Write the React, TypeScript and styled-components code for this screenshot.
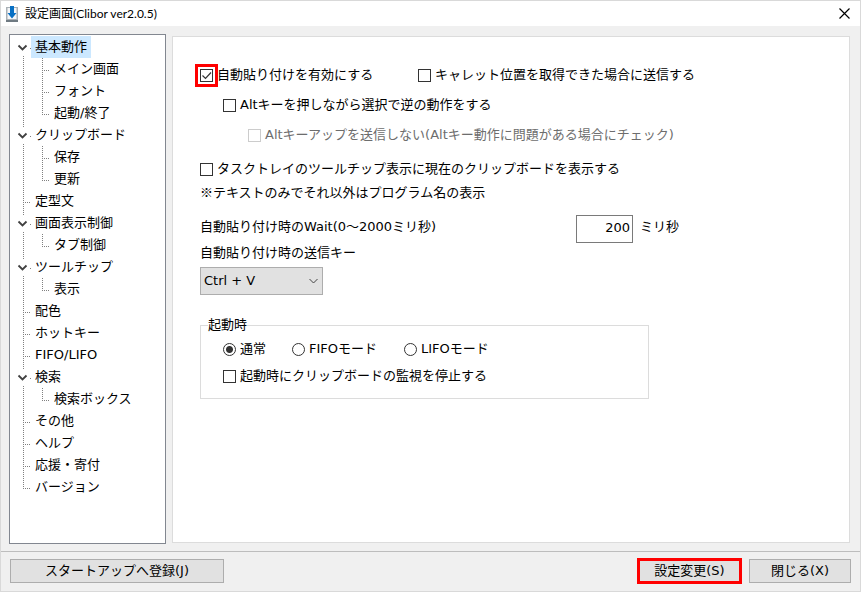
import React, { useState } from "react";
import styled, { createGlobalStyle, css } from "styled-components";

const GlobalStyle = createGlobalStyle`
  * { box-sizing: border-box; }
  body {
    margin: 0;
    color: #000;
    font: 13px/20px "DejaVu Sans", "Noto Sans CJK JP", sans-serif;
  }
  button, input, select { font: inherit; color: inherit; margin: 0; }
`;

const Window = styled.div`
  display: flex;
  flex-direction: column;
  min-height: 100vh;
  border: 1px solid #d9d9d9;
  background: #f0f0f0;
`;

const TitleBar = styled.header`
  display: flex;
  align-items: center;
  gap: 7px;
  height: 25px;
  padding: 0 10px 0 5px;
  background: #fff;
`;

const Title = styled.h1`
  flex: 1;
  margin: 0;
  font: 12px/20px Lato, "Noto Sans CJK JP", sans-serif;
`;

const CloseButton = styled.button`
  display: flex;
  padding: 0;
  border: 0;
  background: none;
`;

const Main = styled.main`
  display: flex;
  flex: 1;
  align-items: stretch;
  gap: 6px;
  padding: 8px 10px 7px 8px;
`;

const TreePane = styled.nav`
  width: 157px;
  flex: none;
  padding-top: 1px;
  border: 1px solid #828790;
  background: #fff;
`;

const TreeList = styled.ul`
  margin: 0;
  padding: 0;
  list-style: none;
`;

const TreeRow = styled.div`
  display: flex;
  height: 22px;
`;

const TreeLabel = styled.button<{ $selected: boolean }>`
  padding: 0 4px;
  border: 0;
  line-height: 22px;
  white-space: nowrap;
  background: ${(p) => (p.$selected ? "#cce8ff" : "none")};
`;

const Panel = styled.section`
  flex: 1;
  min-width: 0;
  margin: 2px 0 1px;
  padding: 28px 27px;
  border: 1px solid #dcdcdc;
  background: #fff;
`;

const Row = styled.div<{ $indent?: number; $top?: number }>`
  display: flex;
  margin-top: ${(p) => p.$top ?? 0}px;
  padding-left: ${(p) => p.$indent ?? 0}px;
`;

const PairRow = styled(Row)`
  display: grid;
  grid-template-columns: 218px 1fr;
`;

const Note = styled.p`
  margin: 3px 0 0;
  font-family: "Noto Sans CJK JP", sans-serif;
`;

const WaitRow = styled(Row)`
  display: grid;
  grid-template-columns: 369px 57px 1fr;
  column-gap: 7px;
  line-height: 24px;
`;

const NumberInput = styled.input`
  width: 100%;
  height: 28px;
  padding: 0 2px 3px;
  border: 1px solid #7a7a7a;
  text-align: right;
  background: #fff;
`;

const ChoiceLabel = styled.label<{ $disabled?: boolean }>`
  display: inline-flex;
  align-items: center;
  gap: 4px;
  white-space: nowrap;
  color: ${(p) => (p.$disabled ? "#6d6d6d" : "#000")};
`;

const Overlay = styled.span`
  display: inline-grid;
  align-items: center;
  > * { grid-area: 1 / 1; }
  > svg { justify-self: end; pointer-events: none; }
`;

const choiceBox = css`
  appearance: none;
  width: 13px;
  height: 13px;
  border: 1px solid #333;
  background: #fff;
`;

const CheckInput = styled.input<{ $marked?: boolean }>`
  ${choiceBox}
  ${(p) => p.$marked && "outline: 3px solid #f00; outline-offset: 2px;"}
  &:disabled { border-color: #ccc; }
`;

const RadioInput = styled.input`
  ${choiceBox}
  border-radius: 50%;
  &:checked { background: radial-gradient(circle, #333 3px, #fff 4px); }
`;

const KeySelect = styled.select`
  appearance: none;
  width: 123px;
  height: 28px;
  padding: 0 24px 1px 3px;
  border: 1px solid #adadad;
  border-radius: 0;
  background: #e1e1e1;
`;

const Group = styled.fieldset`
  max-width: 449px;
  margin: 20px 0 0;
  padding: 4px 7px 12px;
  border: 1px solid #dcdcdc;
`;

const GroupTitle = styled.legend`
  padding: 0;
  line-height: 20px;
`;

const RadioRow = styled.div`
  display: grid;
  grid-template-columns: 69px 112px 1fr;
  padding-left: 15px;
`;

const Footer = styled.footer`
  display: flex;
  align-items: center;
  gap: 7px;
  padding: 7px 9px 8px;
  border-top: 1px solid #bdbdbd;
`;

const PushButton = styled.button<{ $width: number; $marked?: boolean }>`
  width: ${(p) => p.$width}px;
  height: 24px;
  padding: 0;
  border: 1px solid #adadad;
  line-height: 20px;
  background: #e1e1e1;
  ${(p) => p.$marked && "border: 3px solid #f00; height: 26px; margin: -1px 0; line-height: 18px;"}
`;

const Spacer = styled.div`
  flex: 1;
`;

type Node = { label: string; children?: string[] };

const tree: Node[] = [
  { label: "基本動作", children: ["メイン画面", "フォント", "起動/終了"] },
  { label: "クリップボード", children: ["保存", "更新"] },
  { label: "定型文" },
  { label: "画面表示制御", children: ["タブ制御"] },
  { label: "ツールチップ", children: ["表示"] },
  { label: "配色" },
  { label: "ホットキー" },
  { label: "FIFO/LIFO" },
  { label: "検索", children: ["検索ボックス"] },
  { label: "その他" },
  { label: "ヘルプ" },
  { label: "応援・寄付" },
  { label: "バージョン" },
];

const dots = { stroke: "#808080", strokeDasharray: "1 1", shapeRendering: "crispEdges" as const };

function RootGuide({ first, last, open }: { first: boolean; last: boolean; open: boolean }) {
  return (
    <svg width="21" height="22" fill="none" aria-hidden="true">
      {open ? (
        <>
          {!first && <path d="M13.5 0V4" {...dots} />}
          <path d="M13.5 20V22M20 12.5H21" {...dots} />
          <path d="M8.5 9.5l4 4 4-4" stroke="#404040" strokeWidth="1.8" />
        </>
      ) : (
        <path d={`M13.5 0V${last ? 12 : 22}M13 12.5H21`} {...dots} />
      )}
    </svg>
  );
}

function ChildGuide({ last, rail }: { last: boolean; rail: boolean }) {
  return (
    <svg width="40" height="22" fill="none" aria-hidden="true">
      <path d={`${rail ? "M13.5 0V22" : ""}M32.5 0V${last ? 12 : 22}M32 12.5H40`} {...dots} />
    </svg>
  );
}

function Check(props: { label: string; defaultChecked?: boolean; disabled?: boolean; marked?: boolean }) {
  const [checked, setChecked] = useState(!!props.defaultChecked);
  return (
    <ChoiceLabel $disabled={props.disabled}>
      <Overlay>
        <CheckInput
          type="checkbox"
          checked={checked}
          disabled={props.disabled}
          $marked={props.marked}
          onChange={(e) => setChecked(e.target.checked)}
        />
        {checked && (
          <svg width="13" height="13" fill="none" aria-hidden="true">
            <path d="M2.5 6.5l3 3 5.5-6" stroke="#333" strokeWidth="1.2" />
          </svg>
        )}
      </Overlay>
      {props.label}
    </ChoiceLabel>
  );
}

export default function App() {
  const [selected, setSelected] = useState("基本動作");
  const item = (label: string) => (
    <TreeLabel type="button" $selected={selected === label} onClick={() => setSelected(label)}>
      {label}
    </TreeLabel>
  );

  return (
    <>
      <GlobalStyle />
      <Window>
        <TitleBar>
          <svg width="12" height="16" fill="none" aria-hidden="true">
            <path d="M0 1h12v15H0z" fill="#a9b0b5" />
            <path d="M1.5 2h9v11h-9z" fill="#f4f6f8" />
            <path d="M0 14h12v2H0z" fill="#6f7a82" />
            <path d="M4 0h4v7h2.500l-4.500 5.500-4.500-5.500H4z" fill="#0870c4" />
          </svg>
          <Title>設定画面(Clibor ver2.0.5)</Title>
          <CloseButton type="button" aria-label="閉じる">
            <svg width="11" height="11" fill="none" aria-hidden="true">
              <path d="M.5.5l10 10M10.5.5l-10 10" stroke="#000" strokeWidth="1.2" />
            </svg>
          </CloseButton>
        </TitleBar>

        <Main>
          <TreePane>
            <TreeList>
              {tree.map((node, i) => (
                <li key={node.label}>
                  <TreeRow>
                    <RootGuide first={i === 0} last={i === tree.length - 1} open={!!node.children} />
                    {item(node.label)}
                  </TreeRow>
                  {node.children && (
                    <TreeList>
                      {node.children.map((child, j) => (
                        <li key={child}>
                          <TreeRow>
                            <ChildGuide
                              last={j === node.children!.length - 1}
                              rail={i < tree.length - 1}
                            />
                            {item(child)}
                          </TreeRow>
                        </li>
                      ))}
                    </TreeList>
                  )}
                </li>
              ))}
            </TreeList>
          </TreePane>

          <Panel>
            <PairRow>
              <Check label="自動貼り付けを有効にする" defaultChecked marked />
              <Check label="キャレット位置を取得できた場合に送信する" />
            </PairRow>
            <Row $indent={23} $top={10}>
              <Check label="Altキーを押しながら選択で逆の動作をする" />
            </Row>
            <Row $indent={48} $top={10}>
              <Check label="Altキーアップを送信しない(Altキー動作に問題がある場合にチェック)" disabled />
            </Row>
            <Row $top={14}>
              <Check label="タスクトレイのツールチップ表示に現在のクリップボードを表示する" />
            </Row>
            <Note>※テキストのみでそれ以外はプログラム名の表示</Note>
            <WaitRow $top={13}>
              <label htmlFor="wait">自動貼り付け時のWait(0～2000ミリ秒)</label>
              <NumberInput id="wait" type="text" inputMode="numeric" defaultValue="200" />
              <span>ミリ秒</span>
            </WaitRow>
            <Row>
              <label htmlFor="send-key">自動貼り付け時の送信キー</label>
            </Row>
            <Row $top={4}>
              <Overlay>
                <KeySelect id="send-key" defaultValue="Ctrl + V">
                  <option>Ctrl + V</option>
                  <option>Shift + Insert</option>
                </KeySelect>
                <svg width="14" height="8" fill="none" aria-hidden="true">
                  <path d="M.5 2l4 4 4-4" stroke="#444" />
                </svg>
              </Overlay>
            </Row>
            <Group>
              <GroupTitle>起動時</GroupTitle>
              <RadioRow>
                {["通常", "FIFOモード", "LIFOモード"].map((label, i) => (
                  <ChoiceLabel key={label}>
                    <RadioInput type="radio" name="startup-mode" defaultChecked={i === 0} />
                    {label}
                  </ChoiceLabel>
                ))}
              </RadioRow>
              <Row $indent={15} $top={7}>
                <Check label="起動時にクリップボードの監視を停止する" />
              </Row>
            </Group>
          </Panel>
        </Main>

        <Footer>
          <PushButton type="button" $width={214}>スタートアップへ登録(J)</PushButton>
          <Spacer />
          <PushButton type="button" $width={105} $marked>設定変更(S)</PushButton>
          <PushButton type="button" $width={102}>閉じる(X)</PushButton>
        </Footer>
      </Window>
    </>
  );
}
